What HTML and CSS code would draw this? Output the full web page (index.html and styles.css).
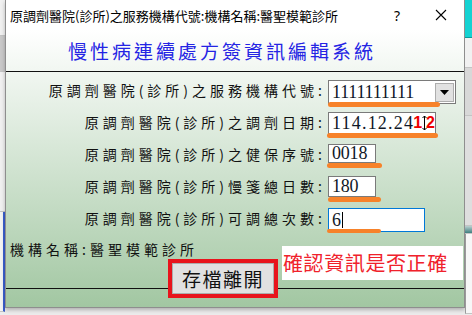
FILE: index.html
```html
<!DOCTYPE html>
<html lang="zh-Hant">
<head>
    <meta charset="UTF-8">
    <meta name="viewport" content="width=device-width, initial-scale=1.0">
    <title>慢性病連續處方簽資訊編輯系統</title>
    <link rel="stylesheet" href="styles.css">
</head>
<body>
    <div class="screen">
        <div class="bg-left">
            <div class="band light"></div>
            <div class="band mid"></div>
            <div class="band light tall"></div>
            <div class="band cells"></div>
        </div>

        <div class="dialog">
            <div class="titlebar">
                <span class="title">原調劑醫院(診所)之服務機構代號:機構名稱:醫聖模範診所</span>
                <span class="help">?</span>
                <span class="close">
                    <svg width="12" height="12" viewBox="0 0 12 12">
                        <path d="M1 1 L11 11 M11 1 L1 11" stroke="#000" stroke-width="1.1" fill="none"/>
                    </svg>
                </span>
            </div>

            <div class="body">
                <div class="header">
                    <h1>慢性病連續處方簽資訊編輯系統</h1>
                </div>

                <div class="form">
                    <div class="row">
                        <label>原調劑醫院(診所)之服務機構代號:</label>
                        <div class="field combo mark-1">
                            <span class="value">1111111111</span>
                            <span class="drop">
                                <svg width="9" height="5" viewBox="0 0 9 5"><path d="M0 0 H9 L4.5 5 Z" fill="#000"/></svg>
                            </span>
                        </div>
                    </div>
                    <div class="row">
                        <label>原調劑醫院(診所)之調劑日期:</label>
                        <div class="field date mark-2">
                            <span class="value">114.12.24</span>
                            <span class="spin">
                                <b>1</b>
                                <svg width="5" height="16" viewBox="0 0 5 16">
                                    <path d="M2.5 1 V15 M0.5 3 L2.5 1 L4.5 3 M0.5 13 L2.5 15 L4.5 13" stroke="#000" stroke-width="1" fill="none"/>
                                </svg>
                                <b>2</b>
                            </span>
                        </div>
                    </div>
                    <div class="row">
                        <label>原調劑醫院(診所)之健保序號:</label>
                        <div class="field short code mark-3">
                            <span class="value">0018</span>
                        </div>
                    </div>
                    <div class="row">
                        <label>原調劑醫院(診所)慢箋總日數:</label>
                        <div class="field short days mark-4">
                            <span class="value">180</span>
                        </div>
                    </div>
                    <div class="row">
                        <label>原調劑醫院(診所)可調總次數:</label>
                        <div class="field focus mark-5">
                            <span class="value">6</span><span class="caret"></span>
                        </div>
                    </div>
                </div>

                <div class="clinic">機構名稱:醫聖模範診所</div>

                <div class="footer">
                    <button class="save">存檔離開</button>
                    <div class="note">確認資訊是否正確</div>
                </div>
                <div class="bottom"></div>
            </div>
        </div>

        <div class="bg-right">
            <div class="band teal"></div>
            <div class="band light"></div>
            <div class="band mid"></div>
            <div class="band light tall"></div>
            <div class="band dark"></div>
            <div class="band white"></div>
        </div>
    </div>
</body>
</html>
```

FILE: styles.css
```css
* {
    box-sizing: border-box;
}
body {
    margin: 0;
    font-family: "Noto Sans CJK TC", "Noto Sans", sans-serif;
    background: #e9e9e9;
}
.screen {
    display: flex;
    width: 472px;
    height: 315px;
    overflow: hidden;
    background: #ececec;
}

/* background window peeking out on both sides */
.bg-left {
    width: 5px;
    display: flex;
    flex-direction: column;
}
.bg-right {
    width: 7px;
    display: flex;
    flex-direction: column;
}
.band {
    height: 36px;
    border-bottom: 1px solid #c4c4c4;
}
.band.light { background: #f1f1f1; }
.band.mid { background: #c9c9c9; }
.band.tall { height: 140px; }
.band.cells {
    height: 100px;
    background: #f4f4f4;
    border-right: 2px solid #3a5fd0;
}
.band.teal {
    height: 38px;
    background: #14d2d2;
    border-bottom: 1px solid #0a9a9a;
}
.bg-right .band.light { height: 30px; }
.bg-right .band.mid { height: 48px; background: #d8d8d8; }
.bg-right .band.tall { height: 110px; background: #dedede; }
.band.dark {
    height: 8px;
    background: linear-gradient(#bcd0d0, #3d7f7f);
}
.band.white {
    height: 80px;
    background: #f7f7f7;
    border-left: 1px solid #9a9a9a;
}

/* dialog */
.dialog {
    width: 460px;
    height: 308px;
    border: 1px solid #8e8e8e;
    border-top: none;
    background: #fff;
    display: flex;
    flex-direction: column;
    box-shadow: 0 2px 4px rgba(0,0,0,0.25);
}
.titlebar {
    height: 30px;
    display: flex;
    align-items: center;
    padding: 0 0 0 4px;
    font-size: 13px;
    color: #000;
}
.title {
    flex: 1;
    white-space: nowrap;
}
.help {
    width: 16px;
    margin-right: 30px;
    text-align: center;
    font-family: "Noto Sans", sans-serif;
    font-size: 14px;
}
.close {
    width: 12px;
    height: 12px;
    margin-right: 17px;
    display: flex;
}
.body {
    flex: 1;
    display: flex;
    flex-direction: column;
    background: linear-gradient(#ffffff, #a2c7a2);
}
.header {
    height: 42px;
    border-bottom: 1px solid #111;
    padding-left: 62px;
}
h1 {
    margin: 0;
    font-size: 19px;
    font-weight: normal;
    letter-spacing: 3px;
    line-height: 42px;
    color: #2424e4;
    white-space: nowrap;
}

/* form rows */
.form {
    padding-top: 8px;
    display: flex;
    flex-direction: column;
}
.row {
    height: 32px;
    display: flex;
    align-items: flex-start;
}
.row label {
    width: 320px;
    padding-right: 0;
    text-align: right;
    font-size: 14px;
    letter-spacing: 4px;
    line-height: 21px;
    color: #111;
    white-space: nowrap;
}
.field {
    position: relative;
    flex-shrink: 0;
    height: 21px;
    width: 108px;
    margin-left: 2px;
    display: flex;
    align-items: center;
    background: #fff;
    border: 1px solid #7a7a7a;
    padding-left: 3px;
    font-family: "Liberation Serif", serif;
    font-size: 18px;
    letter-spacing: -0.2px;
    color: #101828;
    white-space: nowrap;
}
.field::after {
    content: "";
    position: absolute;
    left: -1px;
    height: 5px;
    border-radius: 3px;
    background: #f7822a;
}
.combo {
    width: 128px;
    height: 24px;
}
.combo .value {
    flex: 1;
}
.drop {
    width: 19px;
    height: 19px;
    margin-right: 1px;
    background: #e1e1e1;
    border: 1px solid #adadad;
    display: flex;
    align-items: center;
    justify-content: center;
}
.date {
    width: 108px;
    height: 22px;
}
.date .value {
    letter-spacing: 1.2px;
}
.spin {
    flex-shrink: 0;
    display: flex;
    align-items: center;
    font-family: "Liberation Sans", sans-serif;
    font-size: 16px;
    line-height: 16px;
    letter-spacing: 0;
    color: #ee0000;
}
.spin b {
    font-weight: bold;
    margin: 0 -1px;
}
.spin svg {
    flex-shrink: 0;
    margin-left: 1px;
}
.short {
    width: 48px;
}
.code { height: 19px; }
.days { height: 21px; }
.focus {
    width: 97px;
    height: 24px;
    border-color: #0078d7;
}
.caret {
    width: 1px;
    height: 16px;
    margin-left: 1px;
    background: #000;
}
.mark-1::after { width: 112px; bottom: -4px; }
.mark-2::after { width: 111px; left: -2px; bottom: -5px; }
.mark-3::after { width: 55px; left: -2px; bottom: -6px; }
.mark-4::after { width: 53px; bottom: -6px; }
.mark-5::after { width: 54px; left: -2px; bottom: -2px; height: 4px; }

.clinic {
    height: 18px;
    padding-left: 4px;
    font-size: 14px;
    letter-spacing: 4px;
    line-height: 18px;
    color: #111;
}

/* footer with save button and callout */
.footer {
    position: relative;
    height: 31px;
    border-bottom: 1px solid #111;
}
.save {
    display: block;
    width: 102px;
    height: 31px;
    margin: 5px 0 0 166px;
    padding: 0;
    background: #e1e1e1;
    border: 1px solid #adadad;
    outline: 4px solid #e8141c;
    font-family: "Noto Sans CJK TC", sans-serif;
    font-size: 19px;
    letter-spacing: 1.5px;
    line-height: 28px;
    color: #111;
}
.note {
    position: absolute;
    left: 276px;
    top: -12px;
    width: 181px;
    height: 34px;
    padding-left: 1px;
    background: #fff;
    font-size: 20px;
    letter-spacing: 0.6px;
    line-height: 34px;
    color: #f0212b;
    white-space: nowrap;
}
.bottom {
    flex: 1;
}
```
